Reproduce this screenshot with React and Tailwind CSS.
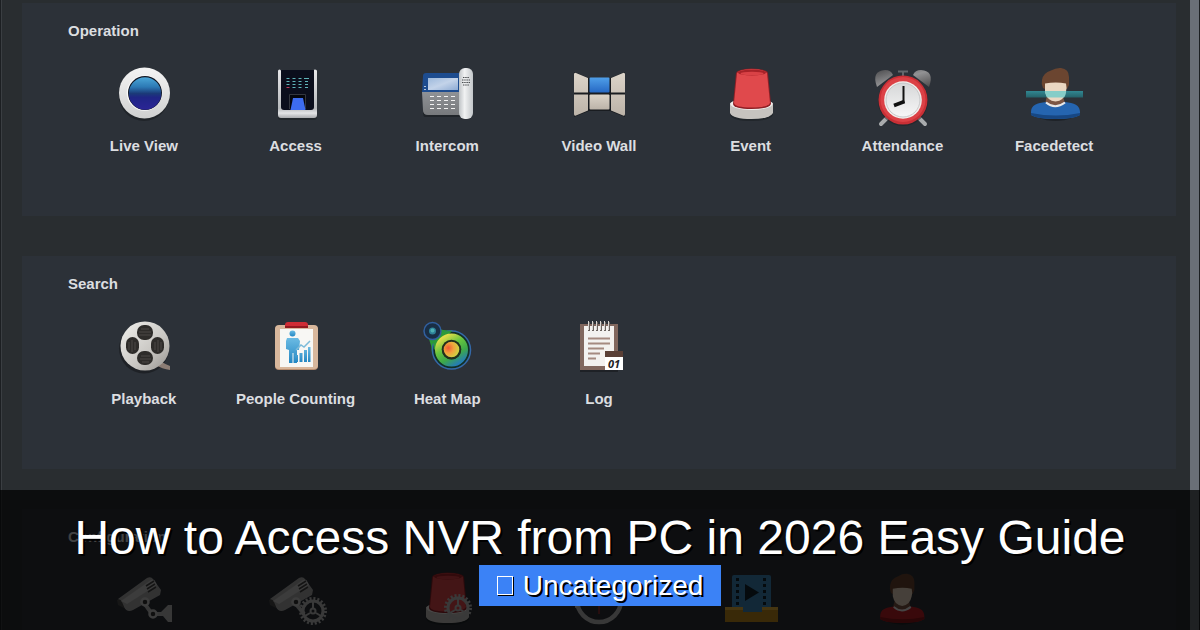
import React from 'react';

function LiveViewIcon() {
  return (
    <svg viewBox="0 0 64 64" className="w-16 h-16" aria-hidden="true">
      <defs>
        <linearGradient id="lvRing" x1="0" y1="0" x2="0" y2="1">
          <stop offset="0" stopColor="#f4f4f4" />
          <stop offset="1" stopColor="#cfd0d0" />
        </linearGradient>
        <linearGradient id="lvLens" x1="0" y1="0" x2="0" y2="1">
          <stop offset="0" stopColor="#4aa6d8" />
          <stop offset="0.3" stopColor="#2c79b4" />
          <stop offset="0.5" stopColor="#1b3a78" />
          <stop offset="0.62" stopColor="#1f2585" />
          <stop offset="1" stopColor="#2b2596" />
        </linearGradient>
      </defs>
      <ellipse cx="32" cy="34" rx="25" ry="25" fill="#1b1f23" opacity="0.7" />
      <circle cx="32.500" cy="31" r="25.500" fill="url(#lvRing)" />
      <circle cx="32.500" cy="31" r="17.800" fill="#fafafa" />
      <circle cx="33" cy="31" r="17" fill="#101522" />
      <circle cx="33" cy="31.500" r="16.200" fill="url(#lvLens)" />
    </svg>
  );
}

function AccessIcon() {
  return (
    <svg viewBox="0 0 64 64" className="w-16 h-16" aria-hidden="true">
      <defs>
        <linearGradient id="acBody" x1="0" y1="0" x2="0" y2="1">
          <stop offset="0" stopColor="#e8e8ea" />
          <stop offset="0.8" stopColor="#b8babd" />
          <stop offset="0.9" stopColor="#e3e4e6" />
          <stop offset="1" stopColor="#a9abae" />
        </linearGradient>
      </defs>
      <path d="M14 10h39v45q0 3-3 3H17q-3 0-3-3z" fill="#1b1f23" opacity="0.6" />
      <path d="M14 9q0-1.500 1.500-1.500T17 9h32q0-1.500 2-1.500T53 9v44q0 3-3 3H17q-3 0-3-3z" fill="url(#acBody)" />
      <path d="M17 8h33v37q0 3-3 3H20q-3 0-3-3z" fill="#0b0e1c" />
      <path d="M22.500 16.500h3M28.500 16.500h3M34.500 16.500h3M40 16.500h5M22.500 19.500h3M28.500 19.500h3M34.500 19.500h3M41 19.500h3M22.500 22.500h3M28.500 22.500h3M34.500 22.500h3M41 22.500h3M28.500 25.500h3M34.500 25.500h3M41 25.500h3" stroke="#5fb3b8" strokeWidth="1" />
      <path d="M22.500 25.500h3" stroke="#c0395c" strokeWidth="1" />
      <path d="M25.500 47V32.500h16V47" fill="#05070e" stroke="#34373f" strokeWidth="1" />
      <path d="M29 36h10l2.500 12h-15z" fill="#3d6cf0" />
    </svg>
  );
}

function IntercomIcon() {
  return (
    <svg viewBox="0 0 64 64" className="w-16 h-16" aria-hidden="true">
      <defs>
        <linearGradient id="icScreen" x1="0" y1="0" x2="1" y2="1">
          <stop offset="0" stopColor="#9db9dc" />
          <stop offset="0.5" stopColor="#c3d3e9" />
          <stop offset="1" stopColor="#8eabd3" />
        </linearGradient>
        <linearGradient id="icBase" x1="0" y1="0" x2="0" y2="1">
          <stop offset="0" stopColor="#8f9296" />
          <stop offset="1" stopColor="#77797c" />
        </linearGradient>
        <linearGradient id="icHandset" x1="0" y1="0" x2="1" y2="0">
          <stop offset="0" stopColor="#bfc3c6" />
          <stop offset="0.4" stopColor="#f1f2f3" />
          <stop offset="1" stopColor="#c2c6c9" />
        </linearGradient>
      </defs>
      <path d="M8 50h38v5H10q-2 0-2-5z" fill="#1b1f23" opacity="0.7" />
      <path d="M8 14q0-3 3-3h34v20H7z" fill="#1d4c8f" />
      <path d="M7 30h39v23H13q-5 0-5-5z" fill="url(#icBase)" />
      <path d="M13 16h30v12H13z" fill="url(#icScreen)" />
      <path d="M9 24.500h2M9 27.500h2" stroke="#b4c6dd" />
      <path d="M15 34.500h4M22 34.500h4M29 34.500h4M36 34.500h4M15 38.500h4M22 38.500h4M29 38.500h4M36 38.500h4M15 42.500h4M22 42.500h4M29 42.500h4M36 42.500h4M15 46.500h4M22 46.500h4M29 46.500h4M36 46.500h4" stroke="#f1f1f1" />
      <rect x="44" y="6" width="14" height="51" rx="6" fill="url(#icHandset)" />
      <path d="M48 15.500h6M47 18h8M47 20.500h8M48 23h6" stroke="#4a4d50" strokeWidth="1" strokeDasharray="1.500 0.700" />
    </svg>
  );
}

function VideoWallIcon() {
  return (
    <svg viewBox="0 0 64 64" className="w-16 h-16" aria-hidden="true">
      <defs>
        <linearGradient id="vwBlue" x1="0" y1="0" x2="0" y2="1">
          <stop offset="0" stopColor="#4f9fe9" />
          <stop offset="1" stopColor="#2668c4" />
        </linearGradient>
        <linearGradient id="vwPane" x1="0" y1="0" x2="0" y2="1">
          <stop offset="0" stopColor="#dcd4c9" />
          <stop offset="1" stopColor="#bcb3a8" />
        </linearGradient>
      </defs>
      <path d="M7 10l15 6h21l15-6v45l-15-6H22L7 55z" fill="#191c20" />
      <path d="M7 12.500q0-2.500 2-1.500L21 16v14.500H7zM58 12.500q0-2.500-2-1.500L44 16v14.500h14zM7 32.500h14v16L9 53.500q-2 1-2-1.500zM58 32.500H44v16l12 5q2 1 2-1.500z" fill="url(#vwPane)" />
      <rect x="22.500" y="32.500" width="20" height="15" rx="1" fill="url(#vwPane)" />
      <rect x="22.500" y="15.500" width="20" height="15" rx="1" fill="url(#vwBlue)" />
    </svg>
  );
}

function EventShape() {
  return (
    <>
      <path d="M11 42v11q3 6 21.500 6T54 53V42z" fill="#1b1f23" opacity="0.6" />
      <path d="M11 41q21-8 43 0v10q-3 6-21.500 6T11 51z" fill="#c6c3bf" />
      <ellipse cx="32.500" cy="42" rx="21" ry="6" fill="#efeeec" />
      <path d="M17 11q1-4 15.500-4.500Q48 7 49 11l3 31q-2 5-19.500 5T14 42z" fill="#8f1f25" />
      <path d="M18 11q2-3.500 14.500-4Q46 7.500 48 11l3 30q-2 4.500-18.500 4.500T15 41z" fill="#e0494c" />
      <ellipse cx="33" cy="10.500" rx="14" ry="3" fill="#a82228" />
      <ellipse cx="33" cy="11.500" rx="11.500" ry="1.800" fill="#d94246" />
    </>
  );
}

function EventIcon() {
  return (
    <svg viewBox="0 0 64 64" className="w-16 h-16" aria-hidden="true">
      <EventShape />
    </svg>
  );
}

function AttendanceIcon() {
  return (
    <svg viewBox="0 0 64 64" className="w-16 h-16 overflow-visible" aria-hidden="true">
      <defs>
        <linearGradient id="atBell" x1="0" y1="0" x2="1" y2="1">
          <stop offset="0" stopColor="#4c4c4e" />
          <stop offset="0.5" stopColor="#929294" />
          <stop offset="1" stopColor="#4b4a4b" />
        </linearGradient>
        <linearGradient id="atFace" x1="0" y1="0" x2="0" y2="1">
          <stop offset="0" stopColor="#d6d7d8" />
          <stop offset="1" stopColor="#f7f7f7" />
        </linearGradient>
      </defs>
      <path d="M17 56l-6 6M49 56l6 6" stroke="#a9abad" strokeWidth="4" strokeLinecap="round" />
      <path d="M7 25Q1 9 15 8q6 0 8 5zM59 25Q65 9 51 8q-6 0-8 5z" fill="url(#atBell)" />
      <path d="M28 9.500h10M33 10v5" stroke="#63686c" strokeWidth="2" />
      <circle cx="33" cy="39" r="25" fill="#1b1f23" opacity="0.5" />
      <circle cx="33" cy="38" r="24.500" fill="#c92f35" />
      <circle cx="33" cy="37.500" r="22.500" fill="#dc4146" />
      <circle cx="33" cy="38" r="18.800" fill="#f2efec" />
      <circle cx="33" cy="38" r="17" fill="url(#atFace)" stroke="#bcbec0" strokeWidth="0.800" />
      <path d="M33.500 24v17" stroke="#111" strokeWidth="2" />
      <path d="M34.500 39.500L24 43.500" stroke="#111" strokeWidth="3.500" />
    </svg>
  );
}

function PersonShape({ shirt, shirtDark }) {
  return (
    <>
      <path d="M8 47q5 12 24.500 12T57 47z" fill="#16191d" opacity="0.6" />
      <path d="M24 34h16l2 8q-10 7-20 0z" fill="#7c5644" />
      <path d="M8 50C8 43 14 41 23 40q9 7 19 0c9 1 15 3 15 10v3q-6 4-24.500 4T8 53z" fill={shirt} />
      <path d="M8 51q25 5 49 0v2q-6 4-24.500 4T8 53z" fill={shirtDark} />
      <path d="M23 40.500q9 7.500 19 0" fill="none" stroke="#e8e8e8" strokeWidth="2" />
      <path d="M20 26q-2-4-1-8 1-7 9-9.500 5-3 10-2.500 8 1 8 9v8l-2 4H22z" fill="#6b4530" />
      <path d="M22 21.500q11-2 21 0 1 4 0 8Q41 39 32.500 39.500 24 39 22 29.500z" fill="#ead7c2" />
    </>
  );
}

function FacedetectIcon() {
  return (
    <svg viewBox="0 0 64 64" className="w-16 h-16" aria-hidden="true">
      <defs>
        <linearGradient id="fdBand" x1="0" y1="0" x2="0" y2="1">
          <stop offset="0" stopColor="#318792" />
          <stop offset="1" stopColor="#256169" />
        </linearGradient>
      </defs>
      <path d="M4 29h57v6.500H4z" fill="url(#fdBand)" />
      <g transform="translate(1 0)">
        <PersonShape shirt="#2565b0" shirtDark="#174783" />
        <path d="M22 29h21q0 4-2 6.500H24Q22 32 22 29z" fill="#85cdc8" />
      </g>
    </svg>
  );
}

function PlaybackIcon() {
  return (
    <svg viewBox="0 0 64 64" className="w-16 h-16" aria-hidden="true">
      <defs>
        <linearGradient id="pbReel" x1="0" y1="0" x2="1" y2="1">
          <stop offset="0" stopColor="#f1f0ed" />
          <stop offset="0.6" stopColor="#c9c7c3" />
          <stop offset="1" stopColor="#96938f" />
        </linearGradient>
      </defs>
      <circle cx="32" cy="33.500" r="25" fill="#15181b" opacity="0.6" />
      <path d="M48 46q5 3 10 5v4q-8-1-14-5z" fill="#8c7d75" />
      <circle cx="33" cy="31" r="24.500" fill="url(#pbReel)" />
      <g fill="#2e2c2a">
        <rect x="25" y="10" width="16" height="15" rx="7" />
        <rect x="25" y="36" width="16" height="14" rx="7" />
        <rect x="14" y="22" width="13" height="17" rx="6.500" />
        <rect x="39" y="22" width="13" height="17" rx="6.500" />
      </g>
      <path d="M29 14h8M27 17h12M27 20h12M29 41h9M28 44h11M30 47h7M17 27v8M20 25v12M23 27v8M43 27v8M46 25v12M49 27v8" stroke="#4c4946" strokeWidth="1" />
    </svg>
  );
}

function PeopleCountingIcon() {
  return (
    <svg viewBox="0 0 64 64" className="w-16 h-16" aria-hidden="true">
      <defs>
        <linearGradient id="pcBlue" x1="0" y1="0" x2="0" y2="1">
          <stop offset="0" stopColor="#6cbbe3" />
          <stop offset="1" stopColor="#2487c3" />
        </linearGradient>
      </defs>
      <rect x="11" y="11" width="43" height="44" rx="4" fill="#b98e70" />
      <rect x="11" y="10" width="43" height="44" rx="4" fill="#d8b79c" />
      <path d="M16 14h33v38H16z" fill="#f8f7f4" />
      <path d="M21 10q0-3 3-3h17q3 0 3 3v3H21z" fill="#cf2d35" />
      <path d="M21 11h23v2H21z" fill="#94191f" />
      <g fill="url(#pcBlue)">
        <circle cx="28.500" cy="18.500" r="3" />
        <path d="M23 23h11l2 3-1 9h-2v13h-3.500V38h-1v10H25V35l-3-1v-8z" />
        <path d="M31 40h3v7h-3zM35.500 38h3v9h-3zM40 35h3v12h-3zM44 32h2.500v15H44z" />
      </g>
      <path d="M32 35l5-5 3 2 6-6" fill="none" stroke="#7dbbd9" strokeWidth="1.500" />
    </svg>
  );
}

function HeatMapIcon() {
  return (
    <svg viewBox="0 0 64 64" className="w-16 h-16" aria-hidden="true">
      <defs>
        <linearGradient id="hmRing" x1="0.200" y1="0" x2="0.800" y2="1">
          <stop offset="0" stopColor="#e0dc4b" />
          <stop offset="0.350" stopColor="#68c53e" />
          <stop offset="0.700" stopColor="#3ca849" />
          <stop offset="1" stopColor="#257db2" />
        </linearGradient>
        <radialGradient id="hmCore" cx="0.300" cy="0.400" r="0.750">
          <stop offset="0" stopColor="#ef5a35" />
          <stop offset="0.450" stopColor="#f3a23c" />
          <stop offset="1" stopColor="#c8dc45" />
        </radialGradient>
      </defs>
      <path d="M24 14q6 2 14 1l-12 14-9 10q0-8-3-15z" fill="#2c9a3a" />
      <circle cx="36.500" cy="35" r="19" fill="#123026" stroke="#3469a9" strokeWidth="1.500" />
      <path d="M23 17q8-1 14-1L19 35q0-6-2-11z" fill="#2c9a3a" />
      <circle cx="36.500" cy="35" r="13" fill="none" stroke="url(#hmRing)" strokeWidth="7" />
      <circle cx="36.500" cy="34.500" r="9.800" fill="#24301c" />
      <circle cx="36.500" cy="34.500" r="7.800" fill="url(#hmCore)" />
      <circle cx="17.500" cy="16" r="8.500" fill="#192e45" stroke="#315f9f" strokeWidth="1.500" />
      <circle cx="17.500" cy="16" r="3.500" fill="#2e8298" />
      <circle cx="17.500" cy="15.500" r="2" fill="#4fb0b4" />
    </svg>
  );
}

function LogIcon() {
  return (
    <svg viewBox="0 0 64 64" className="w-16 h-16" aria-hidden="true">
      <path d="M13 12h38v45H13z" fill="#15181b" opacity="0.6" />
      <path d="M13 9h38v46H13z" fill="#81675e" />
      <path d="M17 11h30v40H17z" fill="#f3f1ef" />
      <path d="M21 23.500h22M21 28.500h22M21 33.500h16M21 38.500h12M21 43.500h8" stroke="#a58a80" strokeWidth="2" />
      <path d="M22 7v9M26 7v9M30 7v9M34 7v9M38 7v9M42 7v9" stroke="#6a625e" strokeWidth="2" />
      <path d="M21.500 6v9M25.500 6v9M29.500 6v9M33.500 6v9M37.500 6v9M41.500 6v9" stroke="#d9d6d3" strokeWidth="1" />
      <path d="M38 36h18v19H38z" fill="#fff" />
      <path d="M38 36h18v6H38z" fill="#5a3f36" />
      <text x="47" y="53" textAnchor="middle" fontSize="11" fontWeight="bold" fontStyle="italic" fill="#222" fontFamily="Open Sans, sans-serif">01</text>
    </svg>
  );
}

function CameraShape() {
  return (
    <>
      <path d="M6 33l29-21q4-2 6 1l8 11-1 5-27 15q-6 3-9-3z" fill="#a9a9a9" />
      <path d="M5 34q3-2 5 2t2 6l-6-3z" fill="#4a4a4a" />
      <path d="M9 35l30-21q3-1 4 1l2 4-30 19z" fill="#c8c8c8" />
      <path d="M34 20l8-5M35 23l8-5M36 26l8-5" stroke="#444" strokeWidth="1.500" />
    </>
  );
}

function Gear({ x, y }) {
  return (
    <g transform={`translate(${x} ${y})`} fill="none" stroke="#c0c0c0">
      <circle r="12.500" strokeWidth="3" strokeDasharray="2 1.930" />
      <circle r="10" strokeWidth="3" />
      <circle r="2.500" strokeWidth="2" />
      <path d="M0-9v6M-8 5l5-3M8 5L3 2" strokeWidth="2" />
    </g>
  );
}

function CameraMountIcon() {
  return (
    <svg viewBox="0 2 64 64" className="w-16 h-16" aria-hidden="true">
      <CameraShape />
      <path d="M33 35l8 11h8l7-7h4v17h-4l-5-6H39l-10-14z" fill="#b9b9b9" />
      <circle cx="33" cy="36" r="3.500" fill="#333" stroke="#c9c9c9" strokeWidth="2.500" />
      <circle cx="41" cy="48" r="3.500" fill="#333" stroke="#c9c9c9" strokeWidth="2.500" />
    </svg>
  );
}

function CameraGearIcon() {
  return (
    <svg viewBox="0 2 64 64" className="w-16 h-16" aria-hidden="true">
      <CameraShape />
      <path d="M32 38l8 10" stroke="#b9b9b9" strokeWidth="4" />
      <circle cx="32" cy="36" r="3.500" fill="#333" stroke="#c9c9c9" strokeWidth="2.500" />
      <Gear x={49} y={45} />
    </svg>
  );
}

function EventGearIcon() {
  return (
    <svg viewBox="0 2 64 64" className="w-16 h-16" aria-hidden="true">
      <EventShape />
      <Gear x={43} y={42} />
    </svg>
  );
}

function HistoryIcon() {
  return (
    <svg viewBox="0 2 64 64" className="w-16 h-16" aria-hidden="true">
      <circle cx="32" cy="34" r="22" fill="none" stroke="#bdbdbd" strokeWidth="4.500" />
      <path d="M8 42V27l14 9z" fill="#d0d0d0" />
      <path d="M32 34v14" stroke="#d33" strokeWidth="1" />
    </svg>
  );
}

function VideoStorageIcon() {
  return (
    <svg viewBox="0 2 64 64" className="w-16 h-16" aria-hidden="true">
      <path d="M6 41h53v15H6z" fill="#c08a1c" />
      <path d="M6 41h53v3H6z" fill="#e6b23a" />
      <path d="M15 9h35q2 0 2 2v30h-9v5H24v-5H13V11q0-2 2-2z" fill="#3c86b8" />
      <path d="M18.500 12v28M45.500 12v28" stroke="#11222e" strokeWidth="3" strokeDasharray="3 3" />
      <path d="M26 18l14 8.500L26 35z" fill="#11222e" />
    </svg>
  );
}

function UserIcon() {
  return (
    <svg viewBox="0 2 64 64" className="w-16 h-16" aria-hidden="true">
      <g transform="translate(3 2) scale(0.900 0.960)">
        <PersonShape shirt="#c02026" shirtDark="#8a1418" />
      </g>
    </svg>
  );
}

const sections = [
  {
    title: 'Operation',
    items: [
      { label: 'Live View', Icon: LiveViewIcon },
      { label: 'Access', Icon: AccessIcon },
      { label: 'Intercom', Icon: IntercomIcon },
      { label: 'Video Wall', Icon: VideoWallIcon },
      { label: 'Event', Icon: EventIcon },
      { label: 'Attendance', Icon: AttendanceIcon },
      { label: 'Facedetect', Icon: FacedetectIcon },
    ],
  },
  {
    title: 'Search',
    items: [
      { label: 'Playback', Icon: PlaybackIcon },
      { label: 'People Counting', Icon: PeopleCountingIcon },
      { label: 'Heat Map', Icon: HeatMapIcon },
      { label: 'Log', Icon: LogIcon },
    ],
  },
  {
    title: 'Configuration',
    items: [
      { id: 'camera', Icon: CameraMountIcon },
      { id: 'camera-settings', Icon: CameraGearIcon },
      { id: 'event-settings', Icon: EventGearIcon },
      { id: 'history', Icon: HistoryIcon },
      { id: 'storage', Icon: VideoStorageIcon },
      { id: 'user', Icon: UserIcon },
    ],
  },
];

function Section({ title, items }) {
  return (
    <section className="shrink-0 bg-[#2c3138] px-[46px] pt-[18px] pb-[60px]">
      <h2 className="text-[15px] leading-5 font-bold">{title}</h2>
      <div className="mt-[21px] grid grid-cols-7">
        {items.map(({ id, label, Icon }) => (
          <button
            key={id || label}
            type="button"
            aria-label={label || id}
            className="flex flex-col items-center gap-[10px] cursor-pointer"
          >
            <Icon />
            {label && <span className="text-[15px] leading-5 font-bold whitespace-nowrap">{label}</span>}
          </button>
        ))}
      </div>
    </section>
  );
}

export default function App() {
  return (
    <div className="relative h-screen overflow-hidden bg-[#292d30] font-['Liberation_Sans',Arial,sans-serif] text-[#dcdee0]">
      <div className="flex h-full border-x border-[#1c1f22]">
        <main className="flex flex-1 flex-col gap-10 overflow-hidden border-l border-[#3a3e42] pt-[3px] pr-[14px] pl-5">
          {sections.map((section) => (
            <Section key={section.title} title={section.title} items={section.items} />
          ))}
        </main>
        <div className="w-[9px] bg-[#6a6f77]" />
      </div>

      <div className="absolute inset-x-0 bottom-0 flex flex-col items-center bg-black/70 px-5 pt-5 pb-6 text-white">
        <h1 className="text-5xl leading-[55px] text-center [text-shadow:2px_2px_0_#000]">
          How to Access NVR from PC in 2026 Easy Guide
        </h1>
        <a
          href="#uncategorized"
          className="flex items-center gap-[10px] bg-[#3b82f6] px-[18px] text-[28px] leading-[41px] [text-shadow:2px_2px_0_#000]"
        >
          <span className="h-[19px] w-4 border border-white shadow-[1px_1px_0_#000]" aria-hidden="true" />
          Uncategorized
        </a>
      </div>
    </div>
  );
}
